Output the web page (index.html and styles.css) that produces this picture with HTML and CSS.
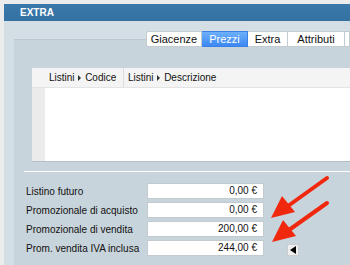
FILE: index.html
```html
<!DOCTYPE html>
<html lang="it">
<head>
  <meta charset="UTF-8">
  <title>Extra</title>
  <link rel="stylesheet" href="styles.css">
</head>
<body>
  <div class="window">
    <div class="title-bar">EXTRA</div>
    <div class="content">
      <div class="tabs">
        <span class="tab tab-giacenze">Giacenze</span>
        <span class="tab tab-prezzi selected">Prezzi</span>
        <span class="tab tab-extra">Extra</span>
        <span class="tab tab-attributi">Attributi</span>
        <span class="tab tab-more"></span>
      </div>
      <div class="panel">
        <div class="list">
          <div class="list-head">
            <span class="col col-code">Listini <i class="caret"></i> Codice</span>
            <span class="col">Listini <i class="caret"></i> Descrizione</span>
          </div>
          <div class="list-body">
            <div class="list-gutter"></div>
          </div>
        </div>
        <div class="separator"></div>
        <div class="form">
          <div class="row">
            <label class="label">Listino futuro</label>
            <span class="field">0,00 €</span>
          </div>
          <div class="row">
            <label class="label">Promozionale di acquisto</label>
            <span class="field">0,00 €</span>
          </div>
          <div class="row">
            <label class="label">Promozionale di vendita</label>
            <span class="field">200,00 €</span>
          </div>
          <div class="row">
            <label class="label">Prom. vendita IVA inclusa</label>
            <span class="field">244,00 €</span>
            <span class="mini-btn"><i class="tri-left"></i></span>
          </div>
        </div>
      </div>
    </div>
  </div>

  <!-- frecce rosse sopra il form -->
  <svg class="arrows" width="350" height="265" viewBox="0 0 350 265">
    <g stroke="#f0280e" stroke-width="4" stroke-linecap="round" fill="#f0280e">
      <line x1="327" y1="178" x2="288" y2="206"/>
      <polygon stroke="none" points="271,218 282,196 295,212"/>
      <line x1="327" y1="203" x2="289" y2="230"/>
      <polygon stroke="none" points="272,242 283,220 296,236"/>
    </g>
  </svg>
</body>
</html>
```

FILE: styles.css
```css
html, body{
  margin: 0;
  height: 100%;
  overflow: hidden;
}
body{
  position: relative;
  box-sizing: border-box;
  padding: 4px 0 0 4px;
  background: #ececec;
  font-family: "Liberation Sans", Arial, sans-serif;
  font-size: 10px;
  color: #111;
}
.window{
  display: flex;
  flex-direction: column;
  height: 100%;
  overflow: hidden;
  background: #d3dee5;
}
.title-bar{
  flex: none;
  height: 17px;
  line-height: 17px;
  padding-left: 16px;
  background: linear-gradient(#3b79ab, #3471a3);
  color: #fff;
  font-weight: bold;
  font-size: 10px;
}

.content{
  flex: 1;
  display: flex;
  flex-direction: column;
  min-height: 0;
  padding: 10px 0 0 10px;
}
.tabs{
  position: relative;
  z-index: 1;
  display: flex;
  flex: none;
  padding-left: 132px;
  height: 16px;
  margin-bottom: -8px;
  white-space: nowrap;
}
.tab{
  box-sizing: border-box;
  height: 16px;
  line-height: 15px;
  text-align: center;
  background: #fff;
  border: 1px solid #c4ccd2;
  border-left: none;
  font-size: 11px;
  color: #111;
}
.tab-giacenze{
  width: 56px;
  border-left: 1px solid #c4ccd2;
  border-radius: 2px 0 0 2px;
}
.tab-prezzi{ width: 46px; }
.tab-extra{ width: 40px; }
.tab-attributi{ width: 57px; }
.tab-more{
  flex: 1;
  min-width: 0;
}
.tab.selected{
  background: linear-gradient(#6fb0fa, #3c88f2);
  border-color: #3a80e6;
  color: #fff;
}
.panel{
  flex: 1;
  min-height: 0;
  padding: 28px 0 0 18px;
  background: #c8d4db;
  border-top: 1px solid #bcc8d0;
}

.list{
  background: #fff;
  box-shadow: 0 1px 0 #b4bec5;
}
.list-head{
  display: flex;
  height: 19px;
  line-height: 19px;
  background: #f4f4f4;
  border-bottom: 1px solid #e4e4e4;
  white-space: nowrap;
}
.col{
  padding-left: 4px;
}
.col-code{
  box-sizing: border-box;
  width: 92px;
  padding-left: 17px;
  border-right: 1px solid #dcdcdc;
}
.caret{
  display: inline-block;
  width: 0;
  height: 0;
  border-left: 3px solid #333;
  border-top: 3px solid transparent;
  border-bottom: 3px solid transparent;
  margin: 0 1px;
}
.list-body{
  height: 73px;
}
.list-gutter{
  width: 13px;
  height: 100%;
  background: #ebebeb;
}
.separator{
  height: 1px;
  margin: 10px 0 0 -8px;
  background: #fff;
}

.form{
  display: flex;
  flex-direction: column;
  gap: 3px;
  padding: 11px 0 0 0;
  margin-left: -6px;
}
.row{
  display: flex;
  align-items: center;
  height: 16px;
}
.label{
  width: 121px;
  font-size: 10px;
}
.field{
  box-sizing: border-box;
  width: 117px;
  height: 16px;
  line-height: 14px;
  padding-right: 6px;
  text-align: right;
  background: #fff;
  border: 1px solid #c3cbd1;
}
.mini-btn{
  display: flex;
  align-items: center;
  justify-content: center;
  box-sizing: border-box;
  width: 12px;
  height: 12px;
  margin: 4px 0 0 23px;
  background: #eeeeee;
  border: 1px solid #c9cdd0;
}
.tri-left{
  width: 0;
  height: 0;
  border-right: 6px solid #000;
  border-top: 4px solid transparent;
  border-bottom: 4px solid transparent;
}

.arrows{
  position: absolute;
  top: 0;
  left: 0;
  pointer-events: none;
}
```
